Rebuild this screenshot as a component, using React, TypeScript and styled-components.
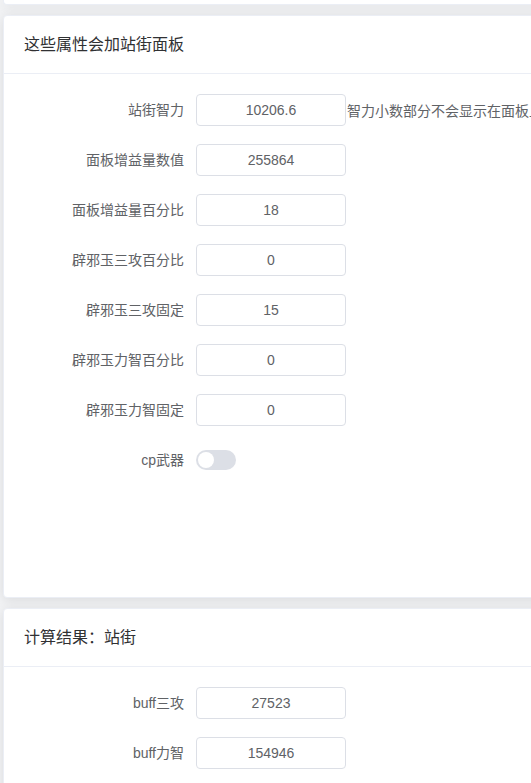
import React, { useState } from "react";
import styled, { createGlobalStyle } from "styled-components";

const GlobalStyle = createGlobalStyle`
  html, body {
    margin: 0;
    padding: 0;
    overflow: hidden;
    background: #f2f3f5;
  }
  body {
    font-family: "Liberation Sans", "Noto Sans CJK SC", sans-serif;
    font-size: 14px;
    color: #606266;
  }
`;

const Page = styled.div`
  width: 640px;
  padding: 0 0 0 3px;
  display: flex;
  flex-direction: column;
  gap: 10px;
`;

const Card = styled.div<{ $height?: number }>`
  background: #fff;
  border: 1px solid #ebeef5;
  border-radius: 4px;
  box-shadow: 0 2px 12px 0 rgba(0, 0, 0, 0.1);
  overflow: hidden;
  box-sizing: border-box;
  height: ${(p) => (p.$height ? `${p.$height}px` : "auto")};
`;

const StubCard = styled(Card)`
  height: 5px;
  border-top: none;
  border-radius: 0 0 4px 4px;
`;

const CardHeader = styled.div`
  padding: 18px 20px;
  line-height: 21px;
  font-size: 16px;
  color: #303133;
  border-bottom: 1px solid #ebeef5;
`;

const CardBody = styled.div`
  padding: 20px;
`;

const FormItem = styled.div`
  display: flex;
  align-items: center;
  height: 32px;
  margin-bottom: 18px;
`;

const Label = styled.label`
  width: 172px;
  flex-shrink: 0;
  padding-right: 12px;
  box-sizing: border-box;
  text-align: right;
  font-size: 14px;
  color: #606266;
  line-height: 32px;
`;

const Input = styled.input`
  width: 150px;
  height: 32px;
  box-sizing: border-box;
  border: 1px solid #dcdfe6;
  border-radius: 4px;
  padding: 0 15px;
  text-align: center;
  font-family: "Liberation Sans", "Noto Sans CJK SC", sans-serif;
  font-size: 14px;
  color: #606266;
  outline: none;
  background: #fff;
`;

const Hint = styled.span`
  margin-left: 1px;
  white-space: nowrap;
  font-size: 14px;
  color: #606266;
`;

const SwitchTrack = styled.button<{ $on: boolean }>`
  position: relative;
  width: 40px;
  height: 20px;
  padding: 0;
  border: none;
  border-radius: 10px;
  background: ${(p) => (p.$on ? "#409eff" : "#dcdfe6")};
  cursor: pointer;
`;

const SwitchKnob = styled.span<{ $on: boolean }>`
  position: absolute;
  top: 2px;
  left: ${(p) => (p.$on ? "22px" : "2px")};
  width: 16px;
  height: 16px;
  border-radius: 50%;
  background: #fff;
  transition: left 0.2s;
`;

const fields = [
  { label: "站街智力", value: "10206.6", hint: "智力小数部分不会显示在面板上" },
  { label: "面板增益量数值", value: "255864" },
  { label: "面板增益量百分比", value: "18" },
  { label: "辟邪玉三攻百分比", value: "0" },
  { label: "辟邪玉三攻固定", value: "15" },
  { label: "辟邪玉力智百分比", value: "0" },
  { label: "辟邪玉力智固定", value: "0" },
];

const results = [
  { label: "buff三攻", value: "27523" },
  { label: "buff力智", value: "154946" },
];

export default function App() {
  const [cp, setCp] = useState(false);

  return (
    <>
      <GlobalStyle />
      <Page>
        <StubCard />

        <Card $height={583}>
          <CardHeader>这些属性会加站街面板</CardHeader>
          <CardBody>
            {fields.map((f) => (
              <FormItem key={f.label}>
                <Label>{f.label}</Label>
                <Input defaultValue={f.value} />
                {f.hint && <Hint>{f.hint}</Hint>}
              </FormItem>
            ))}
            <FormItem>
              <Label>cp武器</Label>
              <SwitchTrack $on={cp} onClick={() => setCp(!cp)}>
                <SwitchKnob $on={cp} />
              </SwitchTrack>
            </FormItem>
          </CardBody>
        </Card>

        <Card>
          <CardHeader>计算结果：站街</CardHeader>
          <CardBody>
            {results.map((r) => (
              <FormItem key={r.label}>
                <Label>{r.label}</Label>
                <Input defaultValue={r.value} readOnly />
              </FormItem>
            ))}
          </CardBody>
        </Card>
      </Page>
    </>
  );
}
